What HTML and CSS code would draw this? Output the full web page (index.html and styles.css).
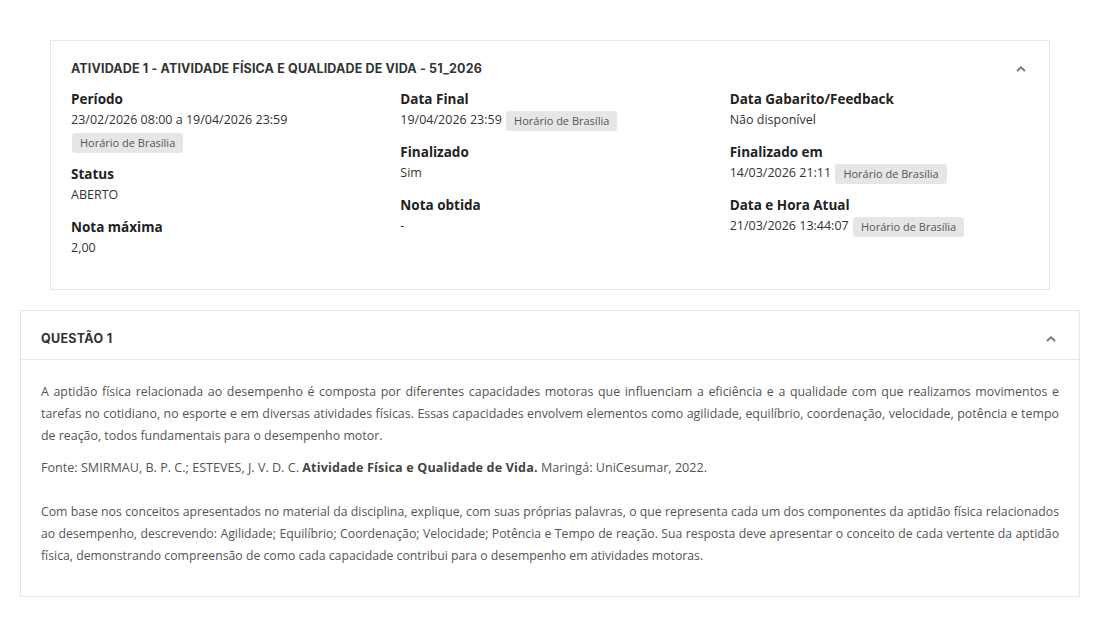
FILE: index.html
```html
<!DOCTYPE html>
<html lang="pt-BR">
<head>
<meta charset="utf-8">
<title>Atividade 1</title>
<link rel="stylesheet" href="styles.css">
</head>
<body>
<div class="page">
  <section class="card info-card">
    <div class="info-head">
      <h2 class="card-title">ATIVIDADE 1 - ATIVIDADE FÍSICA E QUALIDADE DE VIDA - 51_2026</h2>
      <svg class="chev" width="10" height="6" viewBox="0 0 10 6"><polyline points="1,5 5,1.3 9,5" fill="none" stroke="#777" stroke-width="1.8"/></svg>
    </div>
    <div class="info-grid">
      <div class="col">
        <div class="item">
          <div class="label">Período</div>
          <div class="value">23/02/2026 08:00 a 19/04/2026 23:59 <span class="badge">Horário de Brasília</span></div>
        </div>
        <div class="item">
          <div class="label">Status</div>
          <div class="value">ABERTO</div>
        </div>
        <div class="item">
          <div class="label">Nota máxima</div>
          <div class="value">2,00</div>
        </div>
      </div>
      <div class="col">
        <div class="item">
          <div class="label">Data Final</div>
          <div class="value">19/04/2026 23:59 <span class="badge">Horário de Brasília</span></div>
        </div>
        <div class="item">
          <div class="label">Finalizado</div>
          <div class="value">Sim</div>
        </div>
        <div class="item">
          <div class="label">Nota obtida</div>
          <div class="value">-</div>
        </div>
      </div>
      <div class="col">
        <div class="item">
          <div class="label">Data Gabarito/Feedback</div>
          <div class="value">Não disponível</div>
        </div>
        <div class="item">
          <div class="label">Finalizado em</div>
          <div class="value">14/03/2026 21:11 <span class="badge">Horário de Brasília</span></div>
        </div>
        <div class="item">
          <div class="label">Data e Hora Atual</div>
          <div class="value">21/03/2026 13:44:07 <span class="badge">Horário de Brasília</span></div>
        </div>
      </div>
    </div>
  </section>

  <section class="card question-card">
    <div class="q-head">
      <h2 class="card-title">QUESTÃO 1</h2>
      <svg class="chev" width="10" height="6" viewBox="0 0 10 6"><polyline points="1,5 5,1.3 9,5" fill="none" stroke="#777" stroke-width="1.8"/></svg>
    </div>
    <div class="q-body">
      <p class="intro">A aptidão física relacionada ao desempenho é composta por diferentes capacidades motoras que influenciam a eficiência e a qualidade com que realizamos movimentos e tarefas no cotidiano, no esporte e em diversas atividades físicas. Essas capacidades envolvem elementos como agilidade, equilíbrio, coordenação, velocidade, potência e tempo de reação, todos fundamentais para o desempenho motor.</p>
      <p class="source">Fonte: SMIRMAU, B. P. C.; ESTEVES, J. V. D. C. <strong>Atividade Física e Qualidade de Vida.</strong> Maringá: UniCesumar, 2022.</p>
      <p class="blank">&nbsp;</p>
      <p class="prompt">Com base nos conceitos apresentados no material da disciplina, explique, com suas próprias palavras, o que representa cada um dos componentes da aptidão física relacionados ao desempenho, descrevendo: Agilidade; Equilíbrio; Coordenação; Velocidade; Potência e Tempo de reação. Sua resposta deve apresentar o conceito de cada vertente da aptidão física, demonstrando compreensão de como cada capacidade contribui para o desempenho em atividades motoras.</p>
    </div>
  </section>
</div>
</body>
</html>
```

FILE: styles.css
```css
* { box-sizing: border-box; }
html, body { margin: 0; padding: 0; background: #fff; }
body {
  font-family: "Open Sans", "Noto Sans", sans-serif;
  color: #333;
}
.page {
  padding: 40px 20px 20px;
}
.card {
  background: #fff;
  border: 1px solid #e6e6e6;
}
.info-card {
  margin: 0 30px 20px;
  padding: 20px 20px 19px;
}
.info-head, .q-head {
  display: flex;
  align-items: center;
  justify-content: space-between;
}
.card-title {
  margin: 0;
  font-family: Inter, "Open Sans", sans-serif;
  font-size: 12.5px;
  letter-spacing: 0.15px;
  line-height: 16px;
  font-weight: 700;
  color: #333;
}
.chev { display: block; margin-right: 3px; }
.info-head { margin-bottom: 12px; }
.info-grid {
  display: grid;
  grid-template-columns: 1fr 1fr 1fr;
  column-gap: 30px;
}
.item { margin-bottom: 11px; }
.label {
  font-size: 13.5px;
  line-height: 20px;
  font-weight: 700;
  color: #222;
}
.value {
  font-size: 12.5px;
  line-height: 22px;
  color: #333;
}
.badge {
  display: inline-block;
  vertical-align: middle;
  height: 20px;
  line-height: 20px;
  padding: 0 8px;
  margin-left: 1px;
  border-radius: 3px;
  background: #e6e6e6;
  color: #555;
  font-size: 11px;
}
.q-head {
  padding: 20px 20px 12px;
  border-bottom: 1px solid #e6e6e6;
}
.q-head .card-title { letter-spacing: 0.3px; }
.q-body {
  padding: 21px 20px 19px;
}
.q-body p {
  margin: 0 0 10px;
  font-size: 12.3px;
  line-height: 22px;
  color: #555;
  text-align: justify;
}
.q-body p.intro { font-size: 12.4px; }
.q-body p.prompt { font-size: 12.25px; }
.q-body p.source { font-size: 12.6px; margin-bottom: 0; }
.q-body p.blank { margin: 0; }
.q-body strong { font-weight: 700; color: #444; letter-spacing: 0.15px; }
```
